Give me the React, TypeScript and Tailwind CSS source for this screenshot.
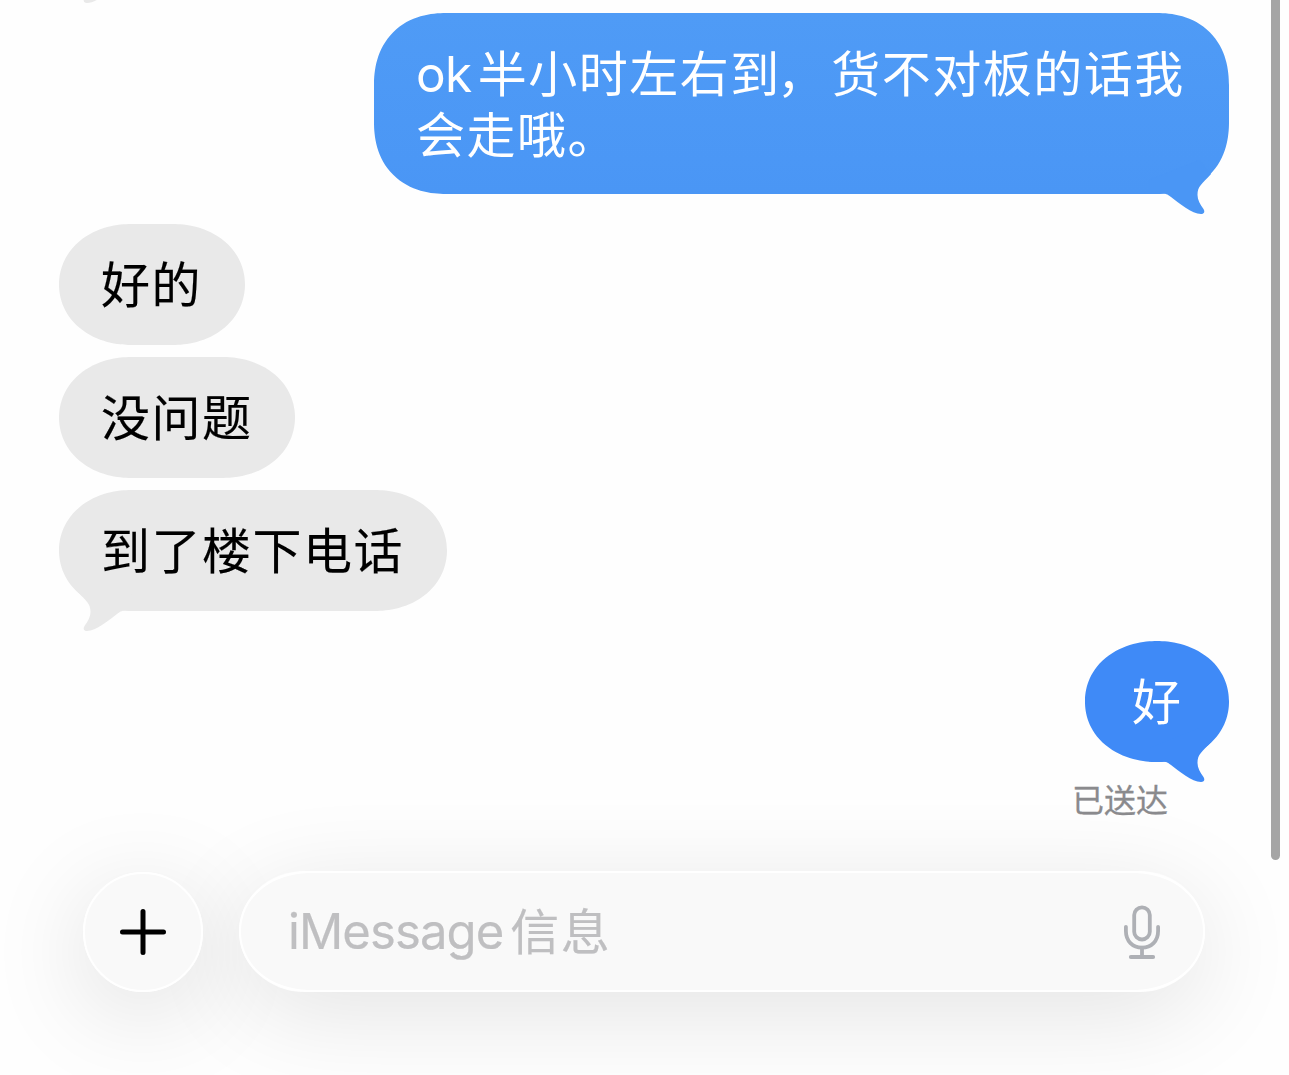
import clsx from "clsx"

const messages = [
  {
    lines: ["ok半小时左右到，货不对板的话我", "会走哦。"],
    mine: true,
    tail: true,
    box: "h-[181px] w-[855px] rounded-[72px] [corner-shape:superellipse(1.16)] bg-linear-to-b from-[#4f9bf6] to-[#4a96f5] text-[#4a96f5]",
  },
  { lines: ["好的"], mine: false, tail: false, box: "mt-[30px] h-[121px] w-[186px]" },
  { lines: ["没问题"], mine: false, tail: false, box: "mt-3 h-[121px] w-[236px]" },
  { lines: ["到了楼下电话"], mine: false, tail: true, box: "mt-3 h-[121px] w-[388px]" },
  {
    lines: ["好"],
    mine: true,
    tail: true,
    box: "mt-[30px] h-[121px] w-[144px] rounded-[72px/60px] [corner-shape:superellipse(1.05)] bg-[#3f8af7] text-[#3f8af7]",
  },
]

function Tail({ className }: { className?: string }) {
  return (
    <svg
      viewBox="0 0 80 66"
      className={clsx("absolute h-[66px] w-[80px]", className)}
      fill="currentColor"
    >
      <path d="M0 30 V43.5 H12 C17 43.5 18 44 22 47 C30 53 43 64 52 64 C55.5 64 56 61.5 54.5 59 C51 54 48.5 50 48.5 45 C48.5 36 53 34 62 24 L50 10 Z" />
    </svg>
  )
}

// CJK line; the full-width comma sits a little closer to its character
function Line({ text }: { text: string }) {
  const latin = text.startsWith("ok") ? "ok" : ""
  const [head, rest] = text.slice(latin.length).split("，")
  return (
    <>
      {latin && <span className="mr-[6px] text-[49.5px] tracking-[-0.6px]">{latin}</span>}
      {head}
      {rest && (
        <>
          <span className="relative -left-[4px]">，</span>
          {rest}
        </>
      )}
    </>
  )
}

function Bubble({ message }: { message: (typeof messages)[number] }) {
  const { lines, mine, tail, box } = message
  return (
    <div
      className={clsx(
        "relative flex shrink-0 flex-col justify-center pt-[3px] pl-[42px]",
        mine
          ? "self-end"
          : "self-start rounded-[72px/60.5px] [corner-shape:superellipse(1.05)] bg-[#e9e9e9] text-[#e9e9e9]",
        box
      )}
    >
      {tail && (
        <Tail className={mine ? "right-0 -bottom-[22px]" : "left-0 -bottom-[22px] -scale-x-100"} />
      )}
      {lines.map((line) => (
        <p
          key={line}
          className={clsx(
            "relative text-[49px] leading-[60.5px] tracking-[1.5px] whitespace-nowrap",
            mine ? "text-white" : "text-black [-webkit-text-stroke:0.15px_black]",
            line === "好" && "pl-[5px]"
          )}
        >
          <Line text={line} />
        </p>
      ))}
    </div>
  )
}

function MicIcon() {
  return (
    <svg
      viewBox="0 0 36 54"
      className="h-[54px] w-[36px]"
      fill="none"
      stroke="#aeb0b5"
      strokeWidth="3.8"
      strokeLinecap="round"
    >
      <rect x="10.2" y="2.3" width="15.6" height="32.2" rx="7.8" />
      <path d="M1.9 21.8 V26 C1.9 36 8.6 42.6 18 42.6 C27.4 42.6 34.1 36 34.1 26 V21.8" />
      <path d="M18 42.6 V52 M6.8 52 H29.2" />
    </svg>
  )
}

export default function App() {
  return (
    <div
      lang="zh-CN"
      className="relative isolate flex h-[1075px] w-[1289px] flex-col overflow-hidden bg-[#fefefe] pt-[13px] font-['Inter','Noto_Sans_CJK_SC',sans-serif]"
    >
      {/* end of the tail of the message above */}
      <Tail className="-top-[61px] left-[59px] -scale-x-100 text-[#e9e9e9]" />

      <main className="flex flex-col pr-[60px] pl-[59px]">
        {messages.map((message) => (
          <Bubble key={message.lines[0]} message={message} />
        ))}
        <p className="mt-[19px] mr-[61px] self-end text-[32px] leading-[40px] text-[#8a8a8d] [-webkit-text-stroke:0.3px_#8a8a8d]">
          已送达
        </p>
      </main>

      {/* INPUT BAR */}
      <footer className="mt-[50px] flex items-center gap-9 pl-[83px]">
        <button
          aria-label="添加"
          className="flex size-[120px] items-center justify-center rounded-full border-[2.5px] border-white bg-[#f9f9f9] before:absolute before:-z-10 before:size-[120px] before:rounded-full before:shadow-[0_20px_100px_rgba(0,0,0,0.13)]"
        >
          <svg viewBox="0 0 46 46" className="size-[46px]" stroke="#000" strokeWidth="5" strokeLinecap="round">
            <path d="M23 2.5 V43.5 M2.5 23 H43.5" />
          </svg>
        </button>
        <div className="flex h-[121px] w-[966px] items-center justify-between rounded-[72px/60.5px] [corner-shape:superellipse(1.05)] border-[2.5px] border-white bg-[#f9f9f9] pr-[43px] pl-[47px] before:absolute before:-z-10 before:-ml-[49px] before:h-[121px] before:w-[966px] before:rounded-[66px/60.5px] before:shadow-[0_20px_100px_rgba(0,0,0,0.11)]">
          <span className="pt-[3px] text-[49px] leading-[60px] tracking-[1.5px] whitespace-nowrap text-[#bfbfc1] [-webkit-text-stroke:0.2px_#bfbfc1]">
            <span className="relative -top-[1px] mr-[7px] tracking-[-0.9px]">iMessage</span>信息
          </span>
          <MicIcon />
        </div>
      </footer>

      {/* scrollbar */}
      <div className="absolute top-0 right-[9px] h-[860px] w-[9px] rounded-b-full bg-[#a5a5a5]" />
    </div>
  )
}
